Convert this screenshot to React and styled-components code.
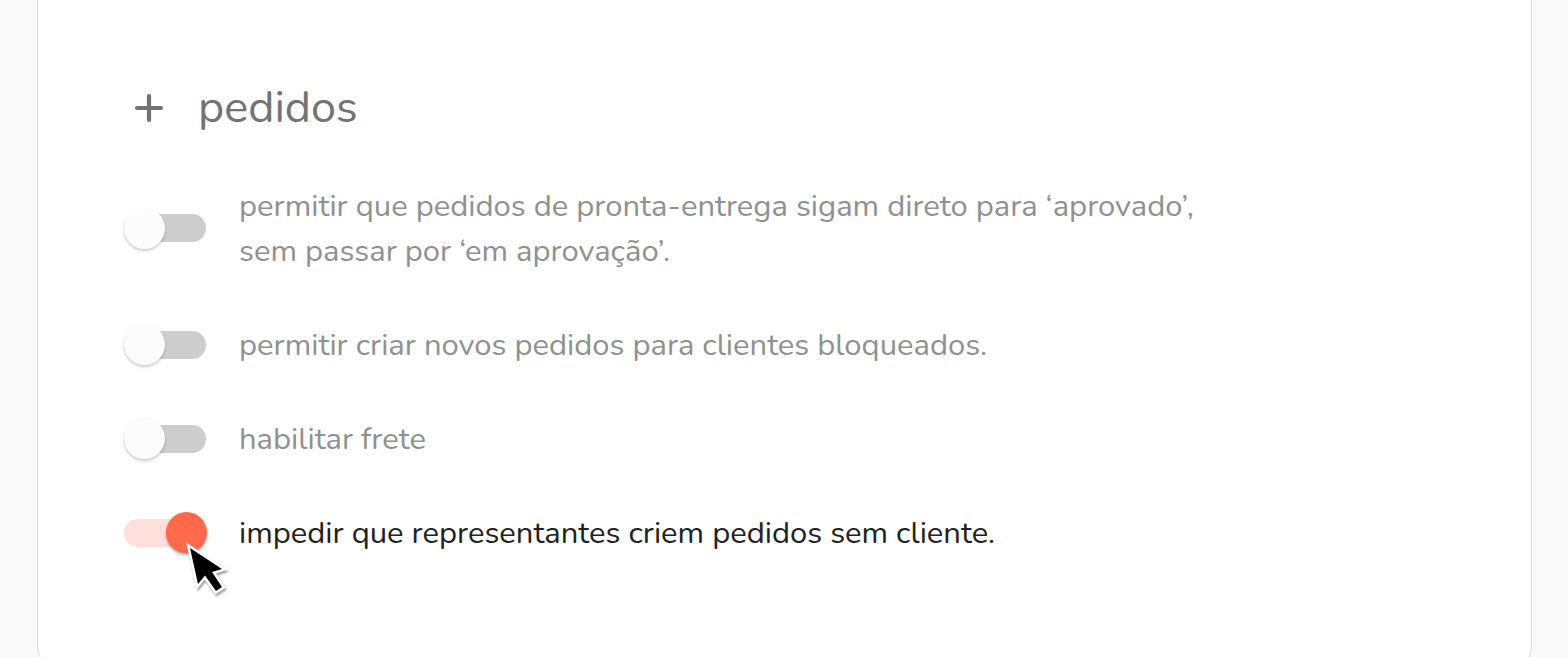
import React, { useState } from "react";
import styled, { createGlobalStyle } from "styled-components";

const Global = createGlobalStyle`
  * { box-sizing: border-box; }
  body { margin: 0; background: #fafafa; font-family: Nunito, "Open Sans", "Noto Sans", sans-serif; }
`;

const Page = styled.main`
  padding: 0 36px 0 37px;
  min-height: 100vh;
  display: flex;
`;

const Card = styled.section`
  flex: 1;
  padding: 76px 86px 110px;
  background: #fff;
  border: 1px solid #dcdcdc;
  border-top: 0;
  border-radius: 0 0 20px 20px;
`;

const Heading = styled.button`
  display: flex;
  align-items: center;
  gap: 34px;
  padding: 0 10px;
  border: 0;
  background: none;
  color: #737373;
  font: inherit;
  cursor: pointer;
`;

const Title = styled.span`
  font-size: 45px;
  line-height: 64px;
`;

const List = styled.div`
  display: flex;
  flex-direction: column;
  gap: 47px;
  margin-top: 42px;
`;

const Row = styled.label`
  display: flex;
  align-items: center;
  gap: 33px;
  font-size: 31px;
  line-height: 45px;
  color: ${(p) => (p.$on ? "#212121" : "#909090")};
`;

const RowText = styled.span`
  padding-top: 2px;
`;

const SwitchBox = styled.span`
  position: relative;
  display: flex;
  flex: none;
`;

const Switch = styled.input`
  appearance: none;
  display: flex;
  align-items: center;
  width: 82px;
  height: 28px;
  margin: 0;
  border-radius: 14px;
  background: #cdcdcd;
  cursor: pointer;
  &::before {
    content: "";
    width: 41px;
    height: 41px;
    border-radius: 50%;
    background: #fcfcfc;
    box-shadow: 0 2px 3px rgba(0, 0, 0, 0.2);
  }
  &:checked { background: #ffe0da; justify-content: flex-end; }
  &:checked::before {
    margin-right: -1px;
    background: #ff6b4a;
    box-shadow: 0 2px 3px rgba(0, 0, 0, 0.35);
  }
`;

const Pointer = styled.svg`
  position: absolute;
  left: 60px;
  top: 22px;
  overflow: visible;
  pointer-events: none;
  filter: drop-shadow(1px 2px 1px rgba(0, 0, 0, 0.4));
`;

const options = [
  <>permitir que pedidos de pronta-entrega sigam direto para ‘aprovado’,<br />sem passar por ‘em aprovação’.</>,
  "permitir criar novos pedidos para clientes bloqueados.",
  "habilitar frete",
  "impedir que representantes criem pedidos sem cliente.",
];

export default function App() {
  const [on, setOn] = useState([false, false, false, true]);
  return (
    <Page>
      <Global />
      <Card>
        <Heading type="button">
          <svg width="30" height="30" viewBox="0 0 30 30" fill="none" stroke="currentColor" strokeWidth="4.2" strokeLinecap="round">
            <path d="M15 3v24M3 15h24" />
          </svg>
          <Title>pedidos</Title>
        </Heading>
        <List>
          {options.map((text, i) => (
            <Row key={i} $on={on[i]}>
              <SwitchBox>
                <Switch type="checkbox" role="switch" checked={on[i]} onChange={() => setOn(on.map((v, j) => (j === i ? !v : v)))} />
                {i === 3 && (
                  <Pointer width="48" height="56" viewBox="0 0 48 56" aria-hidden="true">
                    <path
                      d="M6 7 L14 43 L21 34.5 L32 50 L38 46 L28 31 L38 28 Z"
                      fill="#000"
                      stroke="#fff"
                      strokeWidth="5"
                      paintOrder="stroke"
                    />
                  </Pointer>
                )}
              </SwitchBox>
              <RowText>{text}</RowText>
            </Row>
          ))}
        </List>
      </Card>
    </Page>
  );
}
